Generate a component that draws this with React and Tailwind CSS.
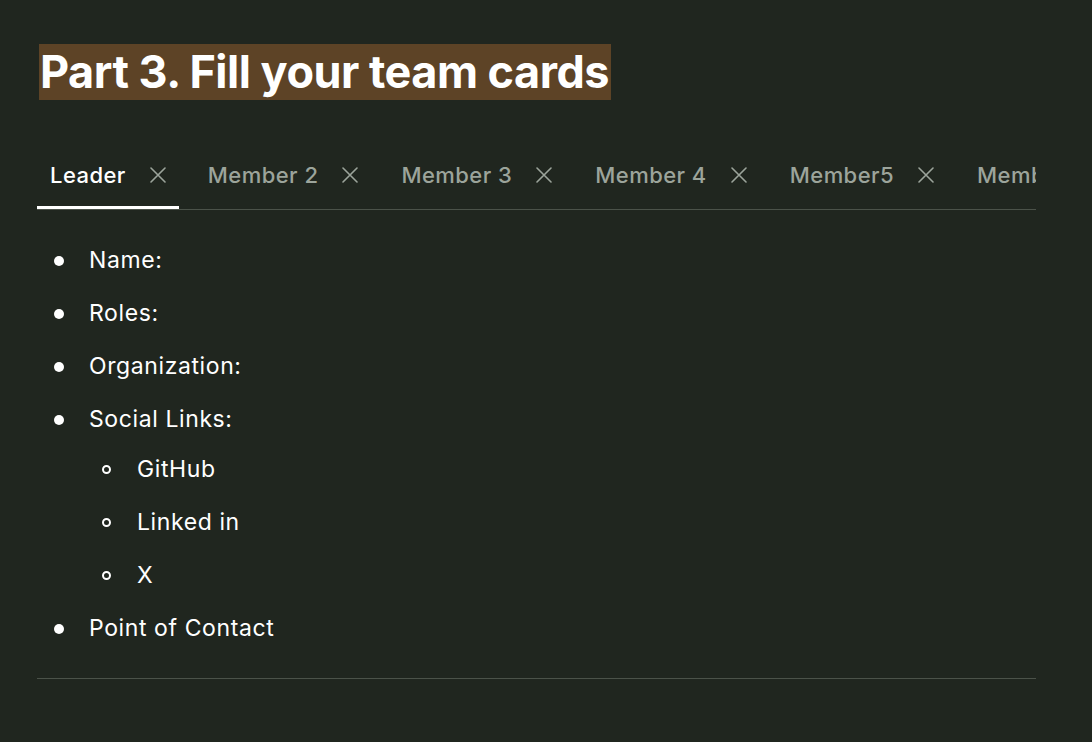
const TABS = ['Leader', 'Member 2', 'Member 3', 'Member 4', 'Member5', 'Member 6'];

// thin close glyph, drawn edge to edge so it lines up with the text
const CloseIcon = () => (
  <svg width="16" height="16" viewBox="0 0 16 16" className="shrink-0 text-[#9ca49b]">
    <path d="M1 1L15 15M15 1L1 15" stroke="currentColor" strokeWidth="1.6" strokeLinecap="round" />
  </svg>
);

const Tab = ({ label, active }) => (
  <div
    className={`flex shrink-0 items-center gap-6 pl-[13px] pb-[20px] pt-[1px] border-b-[3px] ${
      active ? 'pr-[13px] border-white text-white' : 'pr-[14px] border-transparent text-[#9ca49b]'
    }`}
  >
    <span className="text-[22px] font-medium leading-none tracking-[0.45px]">{label}</span>
    <CloseIcon />
  </div>
);

const Bullet = ({ hollow }) =>
  hollow ? (
    <span className="w-[9px] h-[9px] rounded-full border-2 border-white shrink-0" />
  ) : (
    <span className="w-[10px] h-[10px] rounded-full bg-white shrink-0" />
  );

const Item = ({ children, hollow }) => (
  <li className="flex items-center h-[53px]">
    <span className="w-[36px] flex justify-start pl-[1px]">
      <Bullet hollow={hollow} />
    </span>
    <span>{children}</span>
  </li>
);

export default function App() {
  return (
    <div
      className="min-h-[742px] bg-[#20261f] text-white pt-[44px] pl-[37px] pr-[56px]"
      style={{ fontFamily: 'Inter, "Liberation Sans", sans-serif' }}
    >
      <h1 className="inline-block bg-[#5d4326] ml-[2px] pl-[1px] pr-[2px] text-[45px] font-bold leading-[56px] tracking-[-0.5px]">
        Part 3. Fill your team cards
      </h1>

      {/* Tabs */}
      <div className="mt-[63px] flex gap-4 overflow-hidden border-b border-[#4b5249]">
        {TABS.map((t, i) => (
          <Tab key={t} label={t} active={i === 0} />
        ))}
      </div>

      {/* Fields */}
      <ul className="mt-[24px] pl-[16px] text-[23px] leading-none tracking-[0.6px]">
        <Item>Name:</Item>
        <Item>Roles:</Item>
        <Item>Organization:</Item>
        <Item>Social Links:</Item>
        <ul className="pl-[48px] -mt-[3px]">
          <Item hollow>GitHub</Item>
          <Item hollow>Linked in</Item>
          <Item hollow>X</Item>
        </ul>
        <Item>Point of Contact</Item>
      </ul>

      <div className="mt-[23px] border-t border-[#4b5249]" />
    </div>
  );
}
